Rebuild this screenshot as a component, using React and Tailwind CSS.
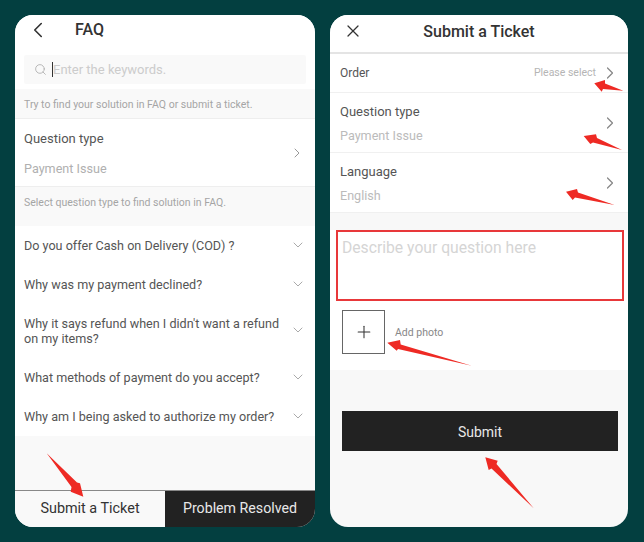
import { ChevronLeft, ChevronRight, ChevronDown, Search, X, Plus } from "lucide-react";

const faqs = [
  "Do you offer Cash on Delivery (COD) ?",
  "Why was my payment declined?",
  "Why it says refund when I didn't want a refund on my items?",
  "What methods of payment do you accept?",
  "Why am I being asked to authorize my order?",
];

// red annotation arrows, in page coordinates: tail, notch, barb, tip, barb, notch
const arrows = [
  "46.7,453.3 77,482.5 80,483.3 83.3,496.7 70.7,491.7 71.5,487",
  "623.3,90.7 605,83.5 605,80 594.3,83.3 601.7,91.7 603,89",
  "622,150 597,138 596,134.3 583.7,136 590.3,144 593,142.5",
  "614.7,205 578,192.5 577,189 566,191.7 572.7,200 575,197.5",
  "471.7,365.7 400.7,344.5 400,340 387.3,342.7 396.7,350.7 398,349",
  "533.7,508.3 496.5,464 497.7,460.7 485.3,457.3 488.7,470 491.5,468.5",
];

const SelectRow = ({ label, value }) => (
  <div className="flex h-[60px] items-center justify-between border-b border-[#f0f0f0] pl-[10px] pr-[8px]">
    <div className="pt-[2px]">
      <p className="text-[13px] leading-[18px] text-[#555]">{label}</p>
      <p className="mt-[6px] text-[12.6px] leading-[18px] text-[#bbb]">{value}</p>
    </div>
    <ChevronRight size={20} strokeWidth={1.5} className="text-[#888]" />
  </div>
);

const FaqScreen = () => (
  <div className="flex h-[512px] w-[300px] flex-col overflow-hidden rounded-[18px] bg-[#f9f9f9]">
    <div className="bg-white">
      <div className="flex h-[34px] items-center pb-[4px] pl-[10px]">
        <ChevronLeft size={26} strokeWidth={1.5} className="text-[#333]" />
        <span className="ml-[24px] text-[16px] font-medium text-[#333]">FAQ</span>
      </div>
      <div className="mx-[9px] mt-[6px] mb-[5px] flex h-[29px] items-center rounded-[2px] bg-[#f9f9f9] pl-[10px]">
        <Search size={13} strokeWidth={1.5} className="text-[#aaa]" />
        <span className="ml-[5px] h-[15px] w-px bg-[#333]" />
        <span className="text-[13px] text-[#ccc]">Enter the keywords.</span>
      </div>
    </div>
    <p className="flex h-[30px] items-center border-b border-[#eee] pl-[9px] pt-[2px] text-[10.5px] text-[#a5a5a5]">
      Try to find your solution in FAQ or submit a ticket.
    </p>
    <div className="flex h-[68px] items-center justify-between border-b border-[#eee] bg-white pl-[9px] pr-[10px]">
      <div className="pt-[2px]">
        <p className="text-[13px] leading-[18px] text-[#555]">Question type</p>
        <p className="mt-[12px] text-[12.6px] leading-[18px] text-[#b0b0b0]">Payment Issue</p>
      </div>
      <ChevronRight size={16} strokeWidth={1.5} className="text-[#999]" />
    </div>
    <p className="h-[39px] pl-[9px] pt-[9px] text-[10.5px] leading-[14px] text-[#a5a5a5]">
      Select question type to find solution in FAQ.
    </p>
    <ul className="flex flex-col bg-white">
      {faqs.map((q) => (
        <li key={q} className="flex items-center justify-between gap-[8px] py-[12px] pl-[9px] pr-[9px]">
          <span className="w-[258px] text-[12.6px] leading-[15px] text-[#555]">{q}</span>
          <ChevronDown size={16} strokeWidth={1.5} className="-mt-[2px] shrink-0 text-[#aaa]" />
        </li>
      ))}
    </ul>
    <div className="mt-auto flex h-[37px] border-t border-[#888]">
      <button className="w-[150px] bg-[#f9f9f9] text-[14.4px] text-[#333]">Submit a Ticket</button>
      <button className="flex-1 bg-[#222] text-[14.2px] text-[#e8e8e8]">Problem Resolved</button>
    </div>
  </div>
);

const TicketScreen = () => (
  <div className="flex h-[512px] w-[298px] flex-col overflow-hidden rounded-[18px] bg-[#f8f8f8]">
    <div className="relative flex h-[39px] shrink-0 items-center justify-center border-b-2 border-[#e4e4e4] bg-white pb-[3px]">
      <X size={20} strokeWidth={1.5} className="absolute left-[13px] top-[6px] text-[#333]" />
      <span className="text-[16px] font-medium text-[#333]">Submit a Ticket</span>
    </div>
    <div className="flex h-[39px] items-center justify-between border-b border-[#f0f0f0] bg-white pl-[10px] pr-[8px]">
      <span className="text-[12px] text-[#555]">Order</span>
      <span className="flex items-center gap-[4px] text-[10.5px] text-[#b5b5b5]">
        Please select
        <ChevronRight size={20} strokeWidth={1.5} className="text-[#888]" />
      </span>
    </div>
    <div className="bg-white">
      <SelectRow label="Question type" value="Payment Issue" />
      <SelectRow label="Language" value="English" />
    </div>
    <div className="h-[17px] shrink-0" />
    <div className="bg-white px-[7px] pb-[16px]">
      <div className="-ml-px -mr-[3px] h-[71px] border-2 border-[#e8383a] px-[4px] pt-[4px] text-[15.7px] leading-[24px] text-[#d5d5d5]">
        Describe your question here
      </div>
      <div className="mt-[9px] ml-[5px] flex items-center gap-[10px]">
        <div className="flex h-[44px] w-[43px] items-center justify-center border border-[#666]">
          <Plus size={20} strokeWidth={1.25} className="text-[#333]" />
        </div>
        <span className="pt-[2px] text-[10.5px] text-[#888]">Add photo</span>
      </div>
    </div>
    <button className="mx-[12px] mt-[41px] h-[40px] w-[276px] bg-[#222] pt-[2px] text-[14px] text-[#e8e8e8]">Submit</button>
  </div>
);

export default function App() {
  return (
    <div className="relative flex h-[542px] w-[644px] gap-[15px] bg-[#033f40] pl-[15px] pt-[15px] font-['Roboto',sans-serif]">
      <FaqScreen />
      <TicketScreen />
      <svg className="pointer-events-none absolute inset-0" width="644" height="542" fill="#ee2a24">
        {arrows.map((p) => (
          <polygon key={p} points={p} />
        ))}
      </svg>
    </div>
  );
}
